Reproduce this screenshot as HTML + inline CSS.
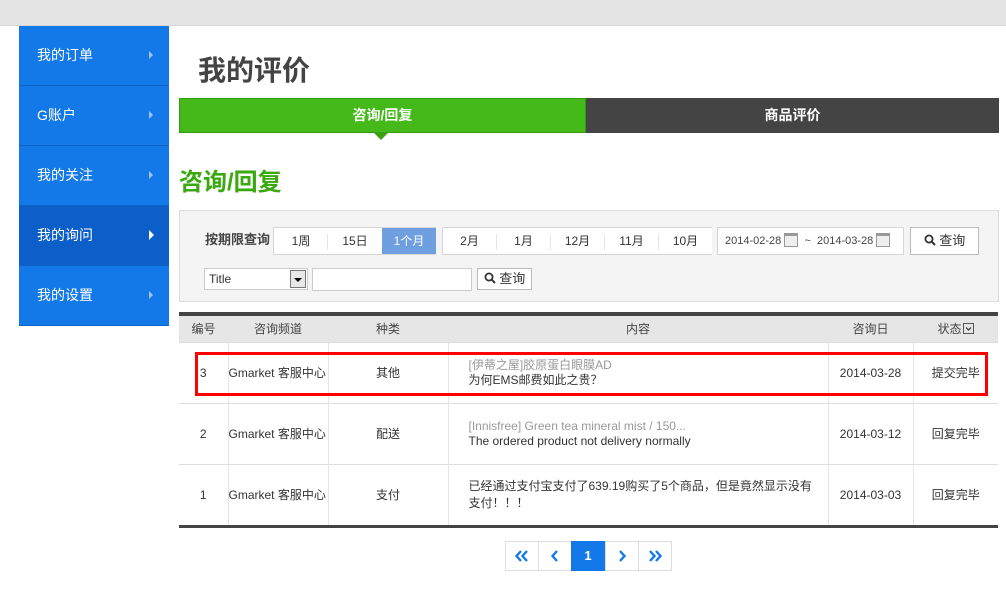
<!DOCTYPE html>
<html><head><meta charset="utf-8"><style>
*{margin:0;padding:0;box-sizing:border-box}
body{width:1006px;height:598px;position:relative;background:#fff;font-family:"Liberation Sans","Noto Sans CJK SC",sans-serif;font-size:12px;color:#333;overflow:hidden}
.a{position:absolute}
.top{left:0;top:0;width:1006px;height:26px;background:#e5e5e5;border-bottom:1px solid #d4d4d4}
.side{left:19px;top:26px;width:150px}
.side div{height:60px;background:#1479e8;color:#fff;font-size:14px;line-height:58px;padding-left:18px;border-bottom:1px solid #0e63c8;position:relative}
.side div.on{background:#0c5fc9}
.side div:after{content:"";position:absolute;left:130px;top:25px;border-left:4px solid #9cc5f5;border-top:4px solid transparent;border-bottom:4px solid transparent}
.side div.on:after{border-left:5px solid #fff;border-top:5px solid transparent;border-bottom:5px solid transparent;top:24px}
.btn{position:absolute;top:0;height:26px;background:#fff;text-align:center;line-height:26px;font-size:12px;color:#333}
.grp{position:absolute;top:16px;height:28px;border:1px solid #d6d6d6;background:#fff}
.sep{position:absolute;top:6px;width:1px;height:16px;background:#e5e5e5}
table{border-collapse:collapse;position:absolute;left:179px;top:312px;width:819px;border-top:4px solid #444;border-bottom:3px solid #444}
th{height:28px;background:#e6e6e6;font-weight:normal;font-size:12px;color:#444}
td{border-top:1px solid #ddd;border-left:1px solid #e6e6e6;font-size:12px;color:#333;text-align:center}
tr td:first-child{border-left:none}
.pg{position:absolute;top:541px;height:30px;width:34px;border:1px solid #ddd;color:#1479e8;text-align:center;line-height:28px;font-weight:bold;font-size:13px;background:#fff}
.pg svg{vertical-align:-2px}
</style></head><body>
<div class="a top"></div>
<div class="a side">
<div>我的订单</div><div>G账户</div><div>我的关注</div><div class="on">我的询问</div><div>我的设置</div>
</div>
<div class="a" style="left:198px;top:52px;font-size:28px;font-weight:bold;color:#444;line-height:38px">我的评价</div>
<div class="a" style="left:179px;top:98px;width:407px;height:35px;background:#46b91a;border:1px solid #2f9e10;color:#fff;font-weight:bold;font-size:14px;text-align:center;line-height:33px">咨询/回复</div>
<div class="a" style="left:373px;top:132px;border-top:8px solid #3aa013;border-left:8px solid transparent;border-right:8px solid transparent"></div>
<div class="a" style="left:586px;top:98px;width:413px;height:35px;background:#444;color:#fff;font-weight:bold;font-size:14px;text-align:center;line-height:35px">商品评价</div>
<div class="a" style="left:179px;top:166px;font-size:24px;font-weight:bold;color:#3aa80f;line-height:34px">咨询/回复</div>

<div class="a" style="left:179px;top:210px;width:820px;height:92px;background:#f4f4f4;border:1px solid #ddd">
 <div class="a" style="left:25px;top:20px;font-weight:bold;font-size:13px;color:#444;line-height:18px">按期限查询</div>
 <div class="grp" style="left:93px;width:163px">
  <div class="btn" style="left:0;width:54px">1周</div><div class="sep" style="left:53px"></div>
  <div class="btn" style="left:54px;width:54px">15日</div>
  <div class="btn" style="left:108px;width:54px;background:#6f9fe0;color:#fff">1个月</div>
 </div>
 <div class="grp" style="left:262px;width:270px">
  <div class="btn" style="left:0;width:53px">2月</div><div class="sep" style="left:53px"></div>
  <div class="btn" style="left:54px;width:53px">1月</div><div class="sep" style="left:107px"></div>
  <div class="btn" style="left:108px;width:53px">12月</div><div class="sep" style="left:161px"></div>
  <div class="btn" style="left:162px;width:53px">11月</div><div class="sep" style="left:215px"></div>
  <div class="btn" style="left:216px;width:53px">10月</div>
 </div>
 <div class="grp" style="left:537px;width:187px;font-size:11px;line-height:26px;color:#444;padding-left:7px;white-space:nowrap">2014-02-28 <span style="display:inline-block;width:14px;height:14px;border:1px solid #999;background:#eee;vertical-align:-3px;border-top:3px solid #999"></span> &nbsp;~&nbsp; 2014-03-28 <span style="display:inline-block;width:14px;height:14px;border:1px solid #999;background:#eee;vertical-align:-3px;border-top:3px solid #999"></span></div>
 <div class="grp" style="left:730px;width:69px;border-color:#bbb;text-align:center;line-height:26px;font-size:13px">
  <svg width="12" height="12" viewBox="0 0 12 12" style="vertical-align:-1px"><circle cx="5" cy="5" r="3.6" fill="none" stroke="#333" stroke-width="1.8"/><path d="M7.6 7.6L11 11" stroke="#333" stroke-width="2"/></svg> 查询</div>
 <div class="a" style="left:24px;top:57px;width:104px;height:22px;background:#fff;border:1px solid #ccc;line-height:20px;padding-left:4px;font-size:12px">Title
  <div class="a" style="right:1px;top:1px;width:16px;height:18px;border:1px solid #777;background:#e8e8e8"><div class="a" style="left:3px;top:7px;border-top:4px solid #000;border-left:4px solid transparent;border-right:4px solid transparent"></div></div></div>
 <div class="a" style="left:132px;top:57px;width:160px;height:23px;background:#fff;border:1px solid #ccc"></div>
 <div class="a" style="left:297px;top:57px;width:55px;height:22px;background:#fff;border:1px solid #bbb;text-align:center;line-height:20px;font-size:13px">
  <svg width="12" height="12" viewBox="0 0 12 12" style="vertical-align:-1px"><circle cx="5" cy="5" r="3.6" fill="none" stroke="#333" stroke-width="1.8"/><path d="M7.6 7.6L11 11" stroke="#333" stroke-width="2"/></svg> 查询</div>
</div>

<table>
<tr><th style="width:49px">编号</th><th style="width:100px">咨询频道</th><th style="width:120px">种类</th><th style="width:380px">内容</th><th style="width:85px">咨询日</th><th>状态<svg width="11" height="11" viewBox="0 0 11 11" style="vertical-align:-1px;margin-left:1px"><rect x="0.5" y="0.5" width="10" height="10" fill="none" stroke="#555"/><path d="M3 4.5L5.5 7L8 4.5" fill="none" stroke="#333" stroke-width="1.2"/></svg></th></tr>
<tr style="height:61px"><td>3</td><td style="text-align:left">Gmarket 客服中心</td><td>其他</td><td style="text-align:left;padding-left:20px;line-height:15px"><span style="color:#999">[伊蒂之屋]胶原蛋白眼膜AD</span><br>为何EMS邮费如此之贵？</td><td>2014-03-28</td><td>提交完毕</td></tr>
<tr style="height:61px"><td>2</td><td style="text-align:left">Gmarket 客服中心</td><td>配送</td><td style="text-align:left;padding-left:20px;line-height:15px"><span style="color:#999">[Innisfree] Green tea mineral mist / 150...</span><br>The ordered product not delivery normally</td><td>2014-03-12</td><td>回复完毕</td></tr>
<tr style="height:62px"><td>1</td><td style="text-align:left">Gmarket 客服中心</td><td>支付</td><td style="text-align:left;padding-left:20px;line-height:17px">已经通过支付宝支付了639.19购买了5个商品，但是竟然显示没有<br>支付！！！</td><td>2014-03-03</td><td>回复完毕</td></tr>
</table>
<div class="a" style="left:195px;top:352px;width:793px;height:44px;border:3px solid #f00"></div>

<div class="pg" style="left:505px"><svg width="14" height="12" viewBox="0 0 14 12"><path d="M6 1L1.5 6L6 11M12 1L7.5 6L12 11" fill="none" stroke="#1479e8" stroke-width="2.4"/></svg></div>
<div class="pg" style="left:538px"><svg width="8" height="12" viewBox="0 0 8 12"><path d="M6 1L1.5 6L6 11" fill="none" stroke="#1479e8" stroke-width="2.4"/></svg></div>
<div class="pg" style="left:571px;background:#1479e8;color:#fff;border-color:#1479e8">1</div>
<div class="pg" style="left:605px"><svg width="8" height="12" viewBox="0 0 8 12"><path d="M2 1L6.5 6L2 11" fill="none" stroke="#1479e8" stroke-width="2.4"/></svg></div>
<div class="pg" style="left:638px"><svg width="14" height="12" viewBox="0 0 14 12"><path d="M2 1L6.5 6L2 11M8 1L12.5 6L8 11" fill="none" stroke="#1479e8" stroke-width="2.4"/></svg></div>
</body></html>
